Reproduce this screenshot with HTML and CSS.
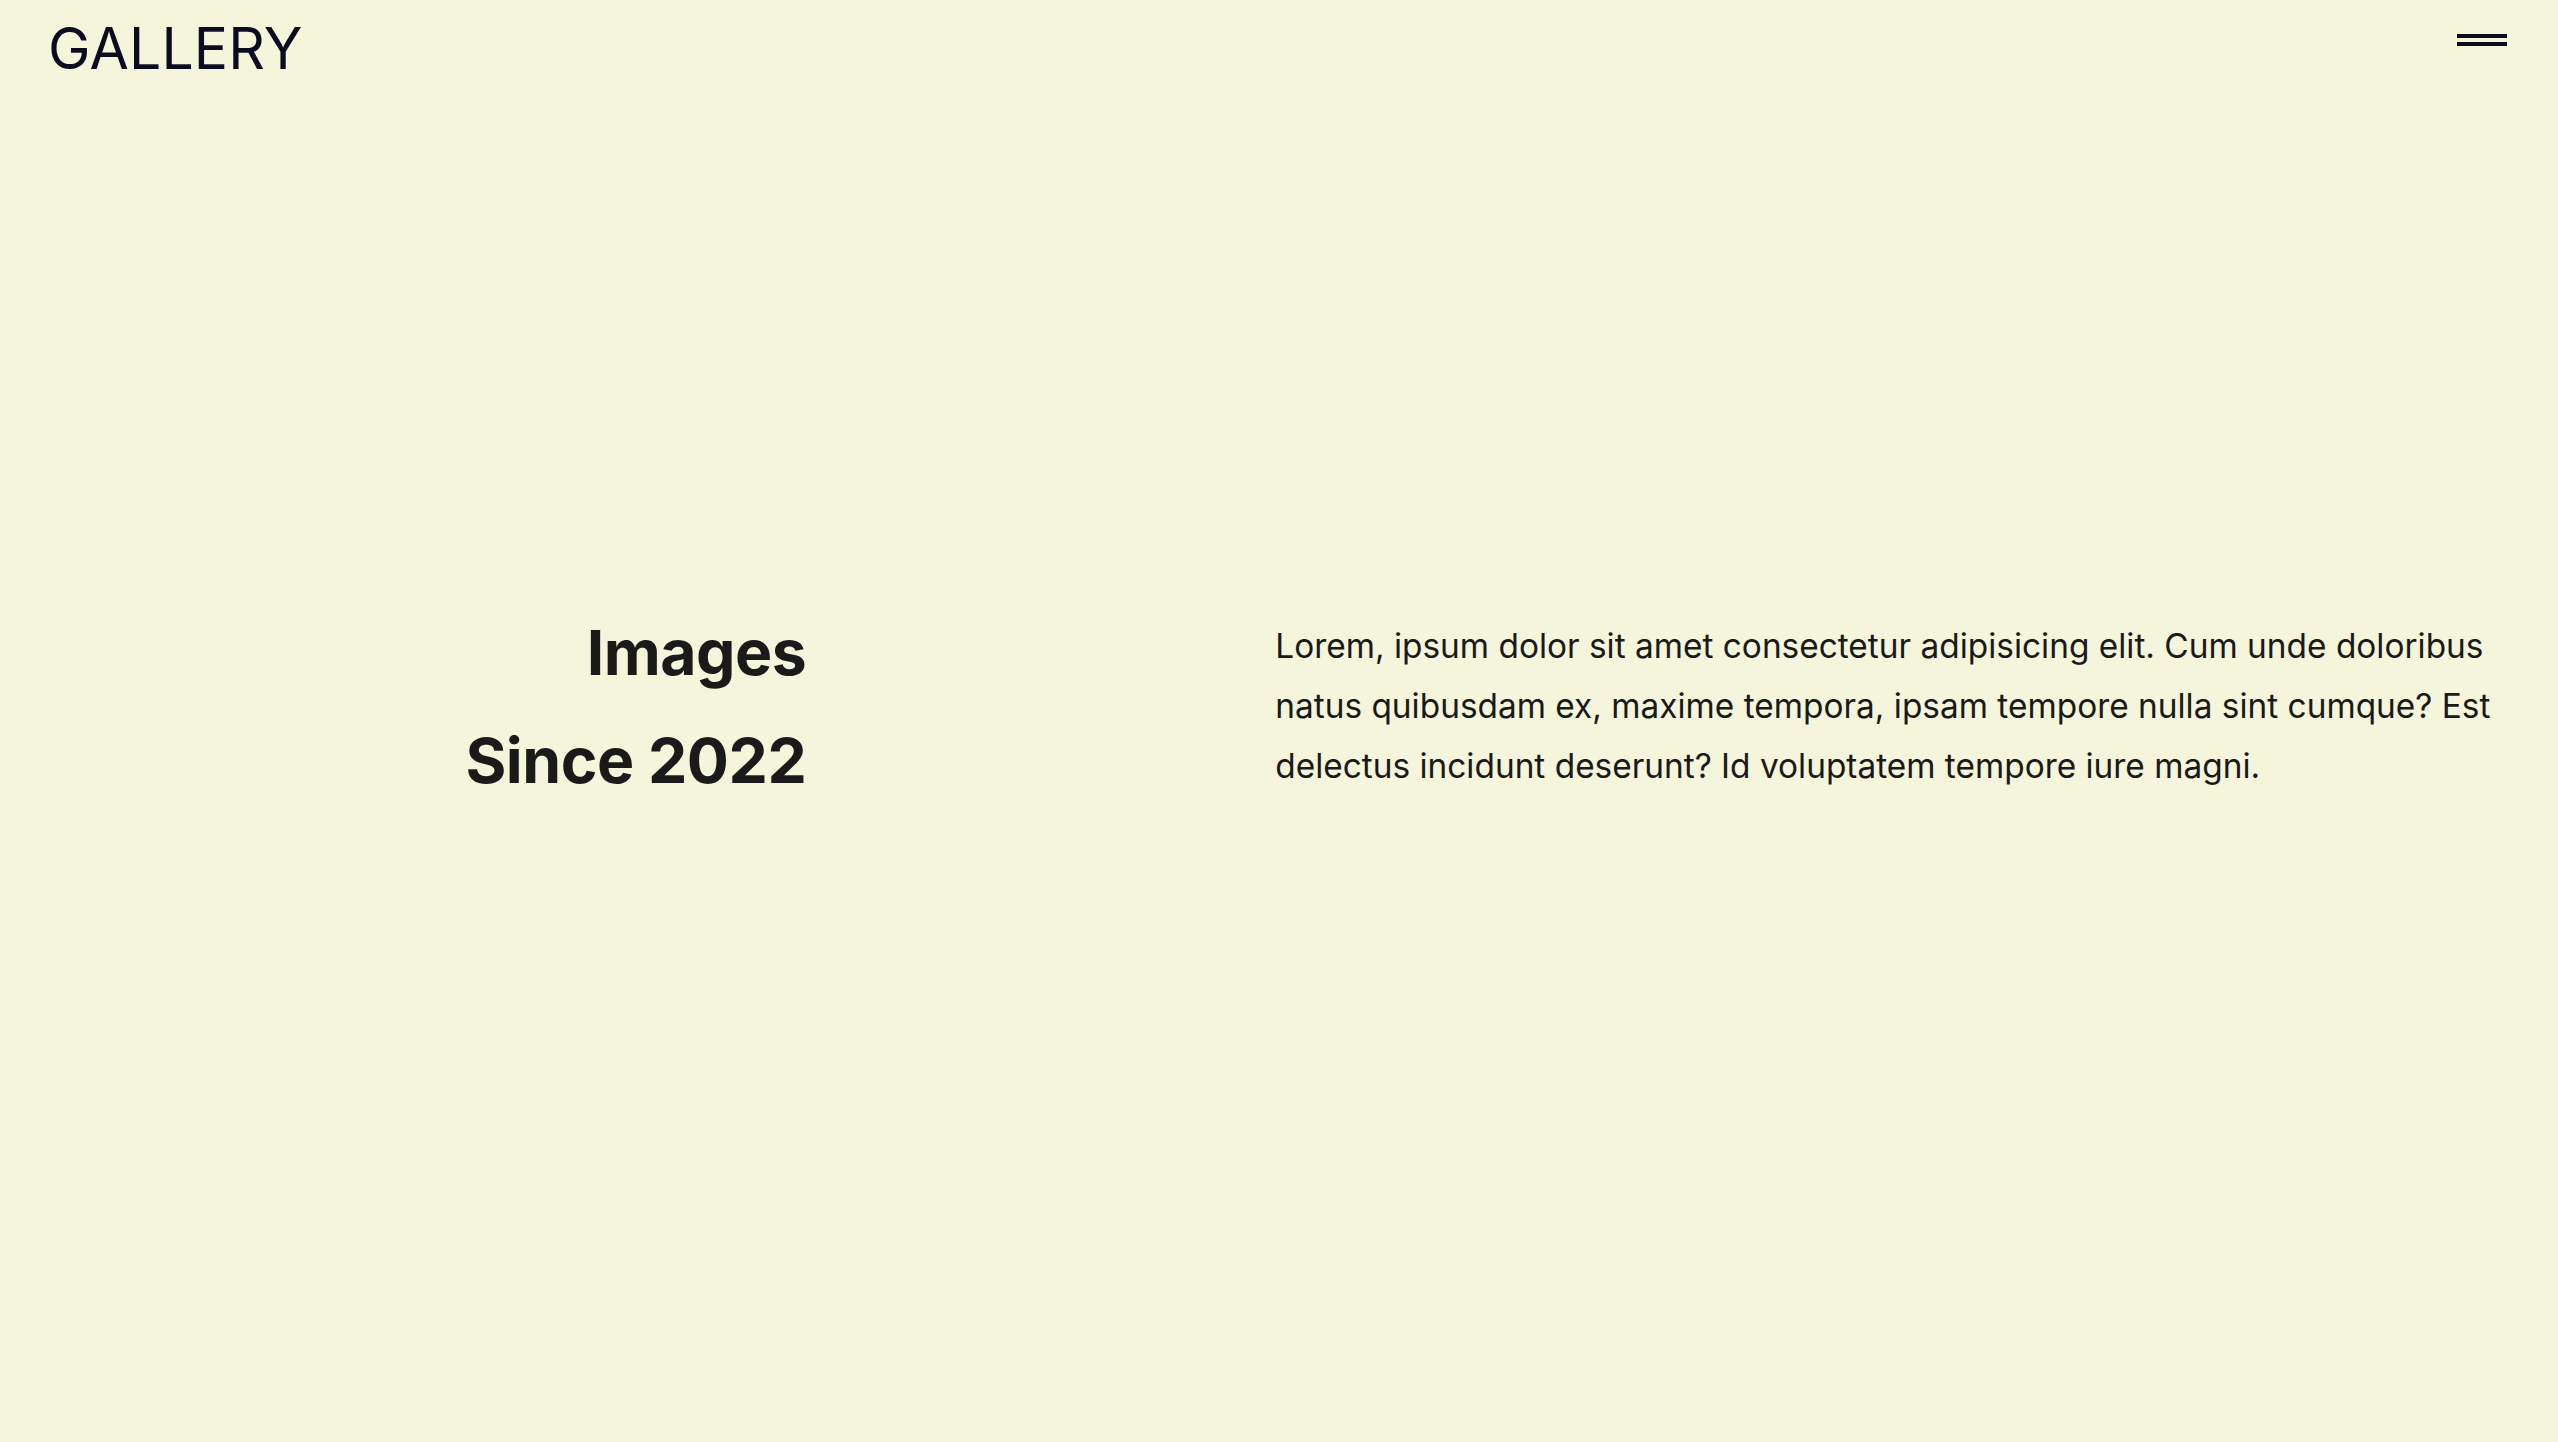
FILE: index.html
```html
<!DOCTYPE html>
<html lang="en">
<head>
<meta charset="utf-8">
<title>Gallery</title>
<link rel="stylesheet" href="styles.css">
</head>
<body>
<div class="page">
  <header class="header">
    <div class="logo">GALLERY</div>
    <button class="menu" aria-label="Menu">
      <span class="bar"></span>
      <span class="bar"></span>
    </button>
  </header>
  <main class="hero">
    <div class="hero-title">
      <h1 class="title">Images<br>Since 2022</h1>
    </div>
    <div class="hero-text">
      <p class="lead">Lorem, ipsum dolor sit amet consectetur adipisicing elit. Cum unde doloribus natus quibusdam ex, maxime tempora, ipsam tempore nulla sint cumque? Est delectus incidunt deserunt? Id voluptatem tempore iure magni.</p>
    </div>
  </main>
</div>
</body>
</html>
```
FILE: styles.css
```css
* { box-sizing: border-box; }
html, body { margin: 0; padding: 0; }
body {
  background: #f5f5dc;
  font-family: Inter, "Noto Sans", sans-serif;
  color: #1a1a1a;
}
.page {
  height: 100vh;
  display: flex;
  flex-direction: column;
}
.header {
  display: flex;
  justify-content: space-between;
  align-items: flex-start;
  padding: 20px 51px 0 48px;
}
.logo {
  font-size: 57px;
  font-weight: 400;
  line-height: 1;
  color: #0b0b22;
  letter-spacing: 0.2px;
}
.menu {
  background: none;
  border: 0;
  padding: 0;
  margin-top: 14px;
  display: flex;
  flex-direction: column;
  gap: 4px;
  cursor: pointer;
}
.bar {
  display: block;
  width: 50px;
  height: 4px;
  background: #0b0b22;
}
.hero {
  flex: 1;
  display: flex;
  align-items: center;
  padding: 0 50px 108px 0;
}
.hero-title {
  width: 811px;
  text-align: right;
}
.title {
  margin: 0;
  font-size: 62.5px;
  font-weight: 700;
  line-height: 108px;
  letter-spacing: -0.5px;
  color: #1a1a1a;
}
.hero-text {
  margin-left: 469px;
  width: 1240px;
}
.lead {
  margin: 0;
  font-size: 33.4px;
  line-height: 60px;
  color: #1a1a1a;
}
```
